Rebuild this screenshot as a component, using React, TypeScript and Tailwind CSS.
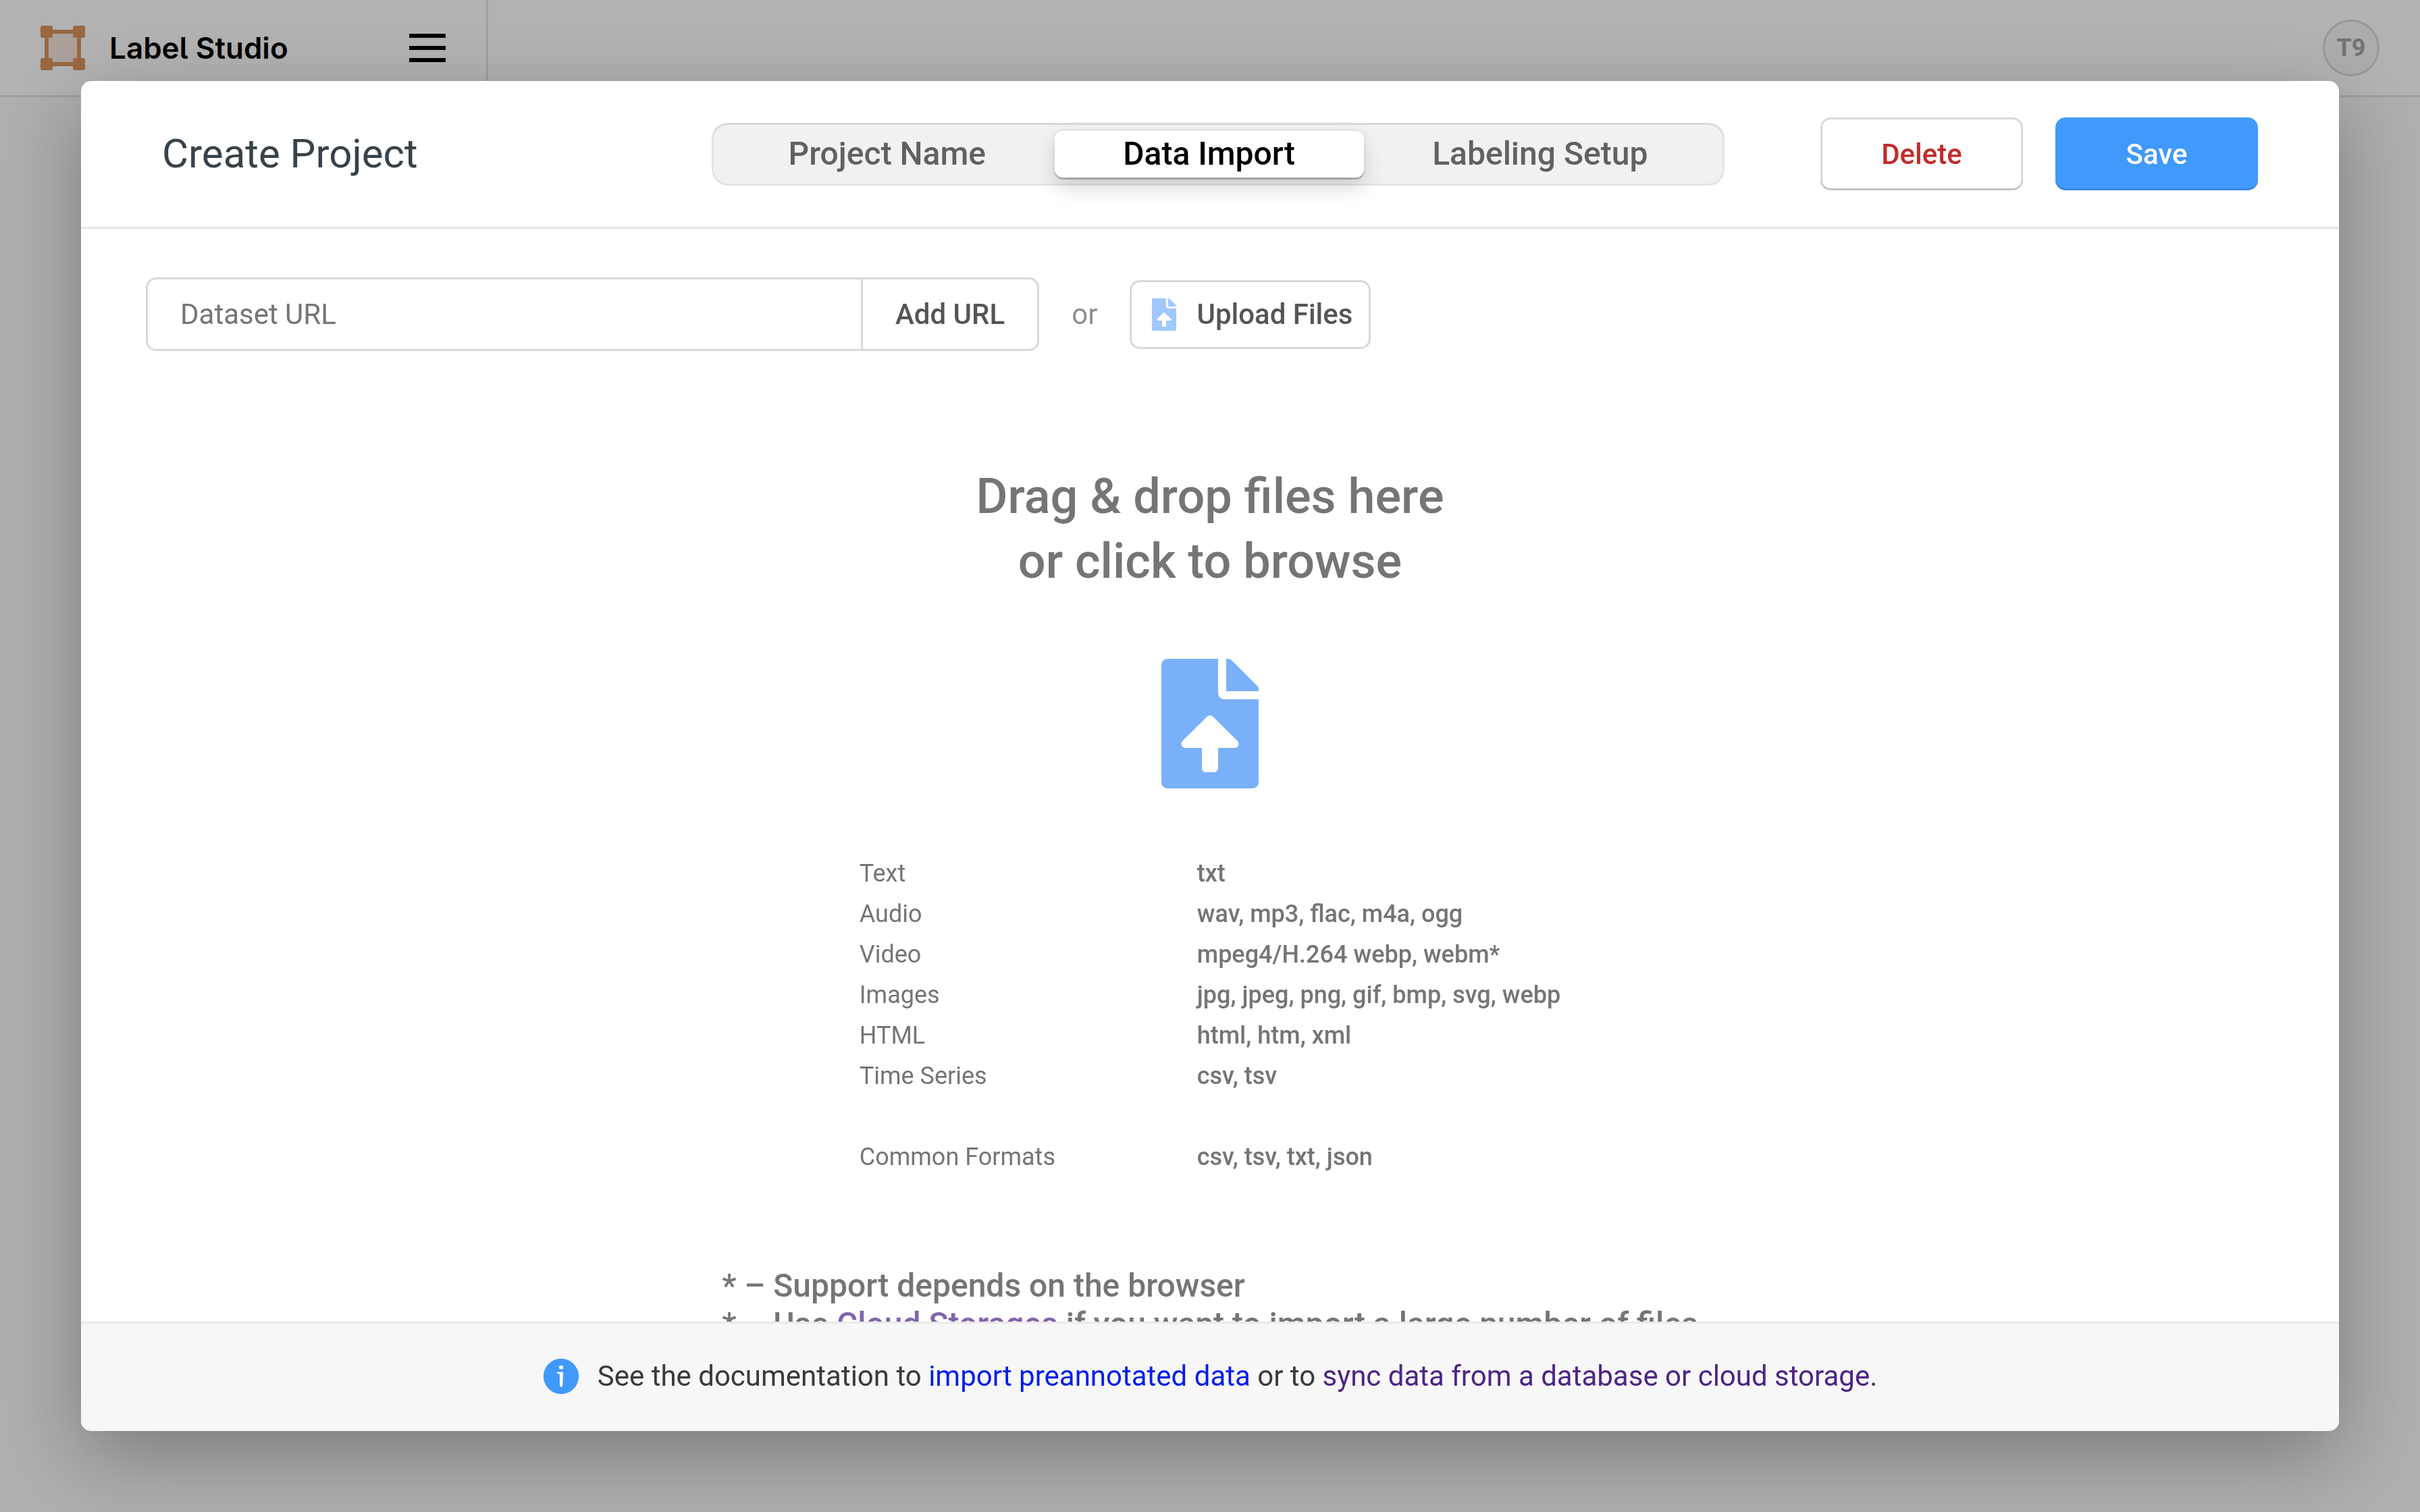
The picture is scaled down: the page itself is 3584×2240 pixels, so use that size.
import React from "react";

const FORMATS: [string, string][] = [
  ["Text", "txt"],
  ["Audio", "wav, mp3, flac, m4a, ogg"],
  ["Video", "mpeg4/H.264 webp, webm*"],
  ["Images", "jpg, jpeg, png, gif, bmp, svg, webp"],
  ["HTML", "html, htm, xml"],
  ["Time Series", "csv, tsv"],
];

function LogoMark() {
  return (
    <svg viewBox="0 0 22 22" className="size-[66px] shrink-0" aria-hidden="true">
      <rect x="3" y="3" width="16" height="16" fill="#f6e5df" stroke="#dc955d" strokeWidth="2" />
      <g fill="#dc955d">
        <rect x="0" y="0" width="6" height="6" rx="1" />
        <rect x="16" y="0" width="6" height="6" rx="1" />
        <rect x="0" y="16" width="6" height="6" rx="1" />
        <rect x="16" y="16" width="6" height="6" rx="1" />
      </g>
    </svg>
  );
}

function FileUploadIcon({ className }: { className: string }) {
  return (
    <svg viewBox="0 0 384 512" className={className} fill="currentColor" aria-hidden="true">
      <path d="M224 136V0H24C10.7 0 0 10.7 0 24v464c0 13.3 10.7 24 24 24h336c13.3 0 24-10.7 24-24V160H248c-13.2 0-24-10.8-24-24zm65.18 216.01H224v80c0 8.84-7.16 16-16 16h-32c-8.84 0-16-7.16-16-16v-80H94.82c-14.28 0-21.41-17.29-11.27-27.36l96.42-95.7c6.65-6.61 17.39-6.61 24.04 0l96.42 95.7c10.15 10.07 3.03 27.36-11.25 27.36zM377 105L279.1 7c-4.5-4.5-10.6-7-17-7H256v128h128v-6.1c0-6.3-2.5-12.4-7-16.9z" />
    </svg>
  );
}

function InfoIcon() {
  return (
    <svg viewBox="0 0 54 54" className="size-[54px] shrink-0" aria-hidden="true">
      <circle cx="27" cy="27" r="26.2" fill="#4099fb" />
      <circle cx="27" cy="13.8" r="3" fill="#fff" />
      <path
        d="M20.5 21.4 Q20.5 20.4 22 20.4 H28.5 Q30 20.4 30 21.8 L29.2 40 Q28.8 43 27 43 Q25.2 43 25 40 L24.8 24 Q24.6 23 22.2 22.9 Q20.5 22.8 20.5 21.4 Z"
        fill="#fff"
      />
    </svg>
  );
}

function TopBar() {
  return (
    <header className="flex h-36 items-stretch border-b-3 border-[#e5e5e5] bg-white">
      <div className="flex w-[723px] items-center border-r-3 border-[#e5e5e5] px-[60px]">
        <a href="#home" className="flex items-center gap-9">
          <LogoMark />
          <span className="font-['Inter','Liberation_Sans',sans-serif] text-[44px] font-semibold text-black [font-feature-settings:'cv05']">
            Label Studio
          </span>
        </a>
        <button type="button" aria-label="Menu" className="ml-auto flex w-[54px] flex-col gap-3">
          <span className="h-1.5 bg-black" />
          <span className="h-1.5 bg-black" />
          <span className="h-1.5 bg-black" />
        </button>
      </div>
      <div className="flex flex-1 items-center justify-end px-[60px]">
        <button
          type="button"
          className="size-21 rounded-full border-3 border-[#dbdbdb] bg-[#f7f7f7] text-4xl font-bold text-[#a6a6a6]"
        >
          T9
        </button>
      </div>
    </header>
  );
}

function Tab({ label, active = false }: { label: string; active?: boolean }) {
  return (
    <button
      type="button"
      role="tab"
      aria-selected={active}
      className={
        active
          ? "flex-auto rounded-xl bg-white text-[48px] leading-[50px] font-medium text-black shadow-[0_3px_0_rgba(0,0,0,0.2),0_0_0_3px_rgba(0,0,0,0.03),0_15px_30px_rgba(0,0,0,0.15)]"
          : "flex-auto text-[48px] leading-[50px] font-medium text-[#616161]"
      }
    >
      {label}
    </button>
  );
}

function ModalHeader() {
  return (
    <div className="flex h-[219px] shrink-0 items-center justify-between border-b-3 border-[#e5e5e5] px-[120px]">
      <h1 className="w-[672px] text-[60px] leading-none text-[#37424b]">Create Project</h1>
      <div
        role="tablist"
        className="flex h-[93px] w-[1500px] rounded-3xl bg-[#f1f1f1] p-3 shadow-[inset_0_3px_0_rgba(0,0,0,0.05),inset_0_0_0_3px_rgba(0,0,0,0.05)]"
      >
        <Tab label="Project Name" />
        <Tab label="Data Import" active />
        <Tab label="Labeling Setup" />
      </div>
      <div className="flex gap-12">
        <button
          type="button"
          className="h-27 w-[300px] rounded-[15px] bg-white text-[42px] font-medium text-[#c12b2b] shadow-[inset_0_0_0_3px_rgba(0,0,0,0.15),inset_0_-3px_0_rgba(0,0,0,0.1)]"
        >
          Delete
        </button>
        <button
          type="button"
          className="h-27 w-[300px] rounded-[15px] bg-[#4099fb] text-[42px] font-medium text-white shadow-[inset_0_-3px_0_rgba(0,0,0,0.1)]"
        >
          Save
        </button>
      </div>
    </div>
  );
}

function ImportBar() {
  return (
    <div className="flex items-center gap-12">
      <form className="flex h-[109px]" onSubmit={(e) => e.preventDefault()}>
        <input
          type="text"
          aria-label="Dataset URL"
          placeholder="Dataset URL"
          className="w-[1062px] rounded-l-[15px] border-3 border-[#d9d9d9] px-12 text-[42px] placeholder:text-[#757575]"
        />
        <button
          type="submit"
          className="rounded-r-[15px] border-3 border-l-0 border-[#d9d9d9] px-12 text-[42px] font-medium text-[#555]"
        >
          Add URL
        </button>
      </form>
      <span className="text-[42px] text-[#8f8f8f]">or</span>
      <button
        type="button"
        className="flex h-[102px] items-center gap-[30px] rounded-[15px] border-3 border-[#d9d9d9] pr-6 pl-[30px] text-[42px] font-medium text-[#555]"
      >
        <FileUploadIcon className="h-12 w-9 text-[#9fc8fd]" />
        Upload Files
      </button>
    </div>
  );
}

function DropZone() {
  return (
    <div className="mt-[168px] flex flex-col items-center text-[#757575]">
      <label htmlFor="file-input" className="flex flex-col items-center gap-24">
        <span className="text-center text-[72px] leading-[96px] font-medium">
          Drag &amp; drop files here
          <br />
          or click to browse
        </span>
        <FileUploadIcon className="h-48 w-36 text-[#7ab0f9]" />
      </label>
      <input id="file-input" type="file" multiple className="sr-only" />
      <table className="mt-24 text-left text-4xl leading-[60px]">
        <tbody>
          {FORMATS.map(([kind, extensions]) => (
            <tr key={kind}>
              <th scope="row" className="w-[500px] p-0 font-normal">{kind}</th>
              <td className="p-0 font-medium">{extensions}</td>
            </tr>
          ))}
          <tr>
            <th scope="row" className="p-0 pt-[60px] font-normal">Common Formats</th>
            <td className="p-0 pt-[60px] font-medium">csv, tsv, txt, json</td>
          </tr>
        </tbody>
      </table>
      <div className="mt-[132px] text-[48px] leading-[57px] font-medium">
        <p>* – Support depends on the browser</p>
        <p>
          * – Use{" "}
          <a href="#storages" className="text-[#8164ab]">Cloud Storages</a> if you want to import a
          large number of files
        </p>
      </div>
    </div>
  );
}

function ModalFooter() {
  return (
    <footer className="flex h-[162px] shrink-0 items-center justify-center gap-[27px] border-t-3 border-[#eaeaea] bg-[#f7f7f7] pb-1 text-[42px] text-[#3a3a3a]">
      <InfoIcon />
      <p>
        See the documentation to{" "}
        <a href="#preannotated" className="text-[#001eec]">import preannotated data</a> or to{" "}
        <a href="#storage" className="text-[#4c2584]">sync data from a database or cloud storage</a>.
      </p>
    </footer>
  );
}

export default function App() {
  return (
    <div className="h-screen bg-[#fafafa] font-['Roboto','Liberation_Sans',sans-serif]">
      <TopBar />
      <div className="fixed inset-0 flex bg-black/30 p-30">
        <div
          role="dialog"
          aria-label="Create Project"
          className="flex min-w-0 flex-1 flex-col overflow-hidden rounded-[15px] bg-white shadow-[0_36px_120px_rgba(0,0,0,0.3)]"
        >
          <ModalHeader />
          <main className="min-h-0 flex-1 overflow-hidden px-24 pt-18">
            <ImportBar />
            <DropZone />
          </main>
          <ModalFooter />
        </div>
      </div>
    </div>
  );
}
